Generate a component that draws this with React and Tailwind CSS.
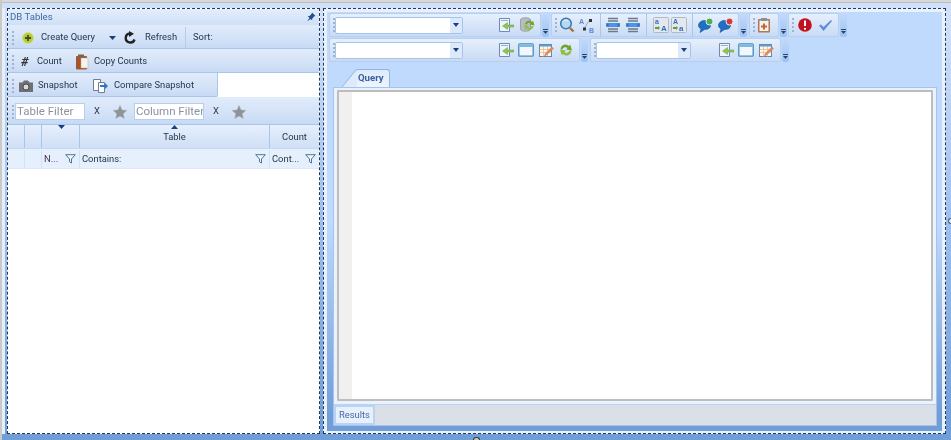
import React from "react";

const Box = ({ w, h = 16, children, vb }) => (
  <svg width={w || h} height={h} viewBox={vb || "0 0 16 16"} className="shrink-0">{children}</svg>
);

const Grip = () => (
  <div className="flex flex-col gap-[2px] w-[3px] items-center shrink-0">
    {[0, 1, 2, 3].map((i) => <div key={i} className="w-[2px] h-[2px] bg-[#9db4d4]" />)}
  </div>
);

const Chevron = ({ w = 6 }) => (
  <svg width={w} height="4" viewBox="0 0 7 4" preserveAspectRatio="none" className="shrink-0"><path d="M0 0h7L3.500 4z" fill="#15417f" /></svg>
);

const Overflow = () => (
  <div className="w-[7px] h-[24px] rounded-[2px] bg-gradient-to-b from-[#c4dafa] to-[#9fc2f3] flex flex-col items-center justify-end pb-[3px] shrink-0">
    <div className="w-[5px] h-[1px] bg-[#23466f] mb-[1px]" />
    <svg width="5" height="3" viewBox="0 0 5 3"><path d="M0 0h5L2.500 3z" fill="#23466f" /></svg>
  </div>
);

const Combo = ({ w }) => (
  <div style={{ width: w }} className="h-[17px] bg-white border border-[#a6c3ec] rounded-[2px] flex justify-end shrink-0">
    <div className="w-[12px] bg-[#dce9fb] flex items-center justify-center"><Chevron /></div>
  </div>
);

const Sep = () => <div className="w-[1px] h-[24px] bg-[#aec6e6] shrink-0" />;

const PageArrow = () => (
  <Box>
    <path d="M1.500 1.500h10v13h-10z" fill="#f1f5fb" stroke="#6c8bb5" />
    <path d="M3 3.500h7" stroke="#8fb0dc" />
    <path d="M16 8H9.500V5.500L4.500 9l5 3.500V10H16z" fill="#8fc45a" stroke="#6ba23c" strokeWidth=".5" />
  </Box>
);
const DbSync = () => (
  <Box>
    <path d="M1.500 3c0-3 10-3 10 0v9c0 3-10 3-10 0z" fill="#b6bcc4" stroke="#9ba2ab" />
    <path d="M6 7a4 4 0 0 1 7-2l1-1.500 1.500 5-5-1 1.500-1a2.400 2.400 0 0 0-4 1z" fill="#6fa52e" />
    <path d="M14.500 9a4 4 0 0 1-7 2.500l-1 1.500L5 8l5 1-1.500 1a2.400 2.400 0 0 0 4-1z" fill="#8cc03f" />
  </Box>
);
const Recycle = () => (
  <Box>
    <path d="M2.500 7a5 5 0 0 1 8.500-3l1.200-1.500 1.800 6-6-1 1.500-1.400a3 3 0 0 0-5 1.400z" fill="#6fa52e" />
    <path d="M13.500 9a5 5 0 0 1-8.500 3l-1.200 1.500L2 7.500l6 1-1.500 1.400a3 3 0 0 0 5-1.400z" fill="#8cc03f" />
  </Box>
);
const WindowIcon = () => (
  <Box>
    <rect x=".8" y="1.800" width="14.400" height="12.400" rx="1" fill="#f3f6fa" stroke="#3f8fc4" strokeWidth="1.300" />
    <rect x="1.500" y="2.500" width="13" height="2.500" fill="#7cb9e4" />
  </Box>
);
const GridEdit = () => (
  <Box>
    <rect x="1.500" y="2.500" width="12" height="12" fill="#fbf8ea" stroke="#5c87b5" />
    <path d="M1.500 7.500h12M1.500 10.500h12M5.500 4.500v10M9.500 4.500v10" stroke="#e6b77a" strokeWidth=".7" />
    <path d="M1.500 2.500h12v2h-12z" fill="#5c9ad0" />
    <path d="M15.500 6.500l-6.500 6-2.500 2 .8-3 6.500-6.500z" fill="#e6953f" stroke="#c2559a" strokeWidth=".5" />
  </Box>
);
const Search = () => (
  <Box>
    <circle cx="7" cy="6.500" r="5.300" fill="#b7d7f2" stroke="#3a78ad" strokeWidth="1.500" />
    <path d="M5 4a3 3 0 0 1 4 0" stroke="#eef6fd" fill="none" />
    <path d="M11 11l3.500 3.500" stroke="#a9713a" strokeWidth="2.400" />
  </Box>
);
const AToB = () => (
  <Box>
    <text x="0" y="7" fontSize="7" fontWeight="700" fill="#5a8cc8" fontFamily="Liberation Sans">A</text>
    <text x="10" y="15.500" fontSize="7" fontWeight="700" fill="#5a8cc8" fontFamily="Liberation Sans">B</text>
    <path d="M11 4L9 5 5.500 11" stroke="#9aa8b8" fill="none" />
    <rect x="10" y="2" width="3" height="3" fill="#333" />
    <rect x="4" y="10.500" width="3" height="3" fill="#333" />
  </Box>
);
const Align = () => (
  <Box>
    <path d="M3 1.500h10M3 4h10M3 12h10M3 14.500h10" stroke="#6f7a88" strokeWidth="1.300" />
    <rect x="1" y="6" width="14" height="4" fill="#4f94e4" />
    <path d="M1 8l2.500-2v4zM15 8l-2.500-2v4z" fill="#2f6fc0" />
  </Box>
);
const CaseIcon = ({ a, b }) => (
  <Box>
    <rect x=".5" y=".5" width="15" height="15" rx="1" fill="#e4e8ee" stroke="#b3b9c0" />
    <text x="2" y="7" fontSize="7" fontWeight="700" fill="#2f6fc0" fontFamily="Liberation Sans">{a}</text>
    <text x="8" y="14" fontSize="8" fontWeight="700" fill="#2f6fc0" fontFamily="Liberation Sans">{b}</text>
    <path d="M2 10h3v-1l2 2-2 2v-1H2z" fill="#5f9e3a" />
  </Box>
);
const Bubble = ({ color }) => (
  <Box>
    <path d="M.5 8.500c0-3 3-5 6-5s6 2 6 5-3 4-6 4L2 15.500l1-3.500C1.500 11 .5 10 .5 8.500z" fill="#1f6fc4" stroke="#124f96" strokeWidth=".6" />
    <circle cx="11.500" cy="4.500" r="3.500" fill={color} stroke="#e9f1f4" strokeWidth="1" />
  </Box>
);
const Clipboard = () => (
  <Box>
    <rect x="2" y="2" width="12" height="13.500" rx="1" fill="#a9795a" />
    <rect x="3.500" y="3.500" width="9" height="10.500" fill="#f5f2ee" />
    <rect x="5" y="1" width="6" height="3" fill="#8b8f96" />
    <path d="M7 6.500h2v2h2v2H9v2H7v-2H5v-2h2z" fill="#c5672c" />
  </Box>
);
const ErrorIcon = () => (
  <Box>
    <circle cx="8" cy="8" r="6.800" fill="#c2121f" />
    <path d="M8 3.500v5.500" stroke="#fff" strokeWidth="2" />
    <circle cx="8" cy="11.800" r="1.100" fill="#fff" />
  </Box>
);
const Check = () => (
  <Box>
    <path d="M2 8.500l2-1 2.500 2.500L14 3l1 1L6.500 14z" fill="#5c8fd8" />
  </Box>
);

const Star = () => (
  <svg width="14" height="14" viewBox="0 0 14 14" className="shrink-0">
    <path d="M7 .5l2 4.500 4.800.5-3.600 3.200 1 4.800L7 11l-4.200 2.500 1-4.800L.2 5.500 5 5z" fill="#8f9297" stroke="#a9adb3" strokeWidth=".5" />
  </svg>
);
const Funnel = () => (
  <svg width="11" height="10" viewBox="0 0 11 10" className="shrink-0">
    <path d="M.7.700h9.600L6.500 5v4L4.500 7.800V5z" fill="#f0f6ff" stroke="#4d7397" strokeWidth="1" />
  </svg>
);

const barClass = "bg-gradient-to-b from-[#e1ecfb] via-[#d6e4f8] to-[#c7daf4] border-b border-[#a9c5ec] flex items-center shrink-0 pt-[2px]";
const groupClass = "h-[24px] bg-gradient-to-b from-[#e6effc] to-[#c9dbf5] border border-[#b8cfef] rounded-[2px] flex items-center shrink-0";
const label = "text-[#26364d] whitespace-nowrap";
const inputClass = "w-[70px] h-[17px] bg-white border border-[#b7cfee] text-[11.5px] text-[#8b93a0] leading-[15px] pl-[1px] overflow-hidden whitespace-nowrap shrink-0";

const TableHead = ({ className = "", children }) => (
  <div className={`h-full border-r border-[#a9c5ec] flex items-center justify-center relative shrink-0 ${className}`}>{children}</div>
);

export default function App() {
  return (
    <div className="relative w-[951px] h-[440px] bg-gradient-to-b from-[#cfe0f8] from-[5%] via-[#9dbeee] via-[50%] to-[#729ed8] to-[95%] flex flex-col overflow-hidden text-[9.4px] [font-family:'Roboto',sans-serif] border-l-2 border-[#c9c9c9] blur-[0.4px]">
      <div className="h-[3px] bg-[#d8d8d8] border-b border-[#bdbdbd] shrink-0" />
      <div className="h-[5px] shrink-0" />
      <div className="flex-1 flex gap-[3px] h-[426px]">
        <div className="w-[5px] shrink-0 border-l-[3px] border-[#e6eefa]" />
        {/* left dock */}
        <div className="w-[313px] h-[426px] bg-white border border-dashed border-[#1d3a63] flex flex-col shrink-0 -ml-[3px]">
          <div className="h-[16px] bg-gradient-to-b from-[#e4eefb] to-[#cfe0f7] flex items-center justify-between pl-[2px] pr-[3px] text-[#3f6aa6] text-[9.6px] shrink-0">
            <span>DB Tables</span>
            <svg width="10" height="10" viewBox="0 0 10 10"><path d="M6 .5L9.500 4 8 4.500 6 7l.3 1.500L4.500 7 1 9.500 3.500 6 1.700 4 3.500 4 5.500 2z" fill="#20508f" /></svg>
          </div>
          <div className={`${barClass} h-[24px] pl-[3px]`}>
            <Grip />
            <svg width="14" height="14" viewBox="0 0 14 14" className="ml-[7px] shrink-0">
              <circle cx="7" cy="7" r="5.500" fill="#b5cd3a" stroke="#d7e27e" />
              <path d="M7 4v6M4 7h6" stroke="#4b4a22" strokeWidth="1.800" />
            </svg>
            <span className={`ml-[6px] w-[68px] ${label}`}>Create Query</span>
            <Chevron w={7} />
            <svg width="14" height="14" viewBox="0 0 14 14" className="ml-[7px] shrink-0">
              <path d="M11.500 8.500A4.500 4.500 0 1 1 7 2.500" fill="none" stroke="#222" strokeWidth="2.400" />
              <path d="M6 0l5 2.800L6 6z" fill="#222" />
            </svg>
            <span className={`ml-[8px] w-[31px] ${label}`}>Refresh</span>
            <div className="w-[1px] h-[22px] bg-[#b5cbe8] ml-[9px]" />
            <span className={`ml-[7px] ${label}`}>Sort:</span>
          </div>
          <div className={`${barClass} h-[24px] pl-[3px]`}>
            <Grip />
            <span className="ml-[7px] w-[12px] text-[13px] font-bold italic text-[#333] leading-none">#</span>
            <span className={`ml-[4px] w-[25px] ${label}`}>Count</span>
            <svg width="14" height="16" viewBox="0 0 14 16" className="ml-[13px] shrink-0">
              <rect x="1" y="2" width="11" height="13.500" rx="1" fill="#a6552a" />
              <path d="M6 4h7v10H6z" fill="#f6f3ee" stroke="#b8a89a" strokeWidth=".5" />
              <rect x="3" y=".5" width="6" height="3" fill="#7a6252" />
            </svg>
            <span className={`ml-[5px] ${label}`}>Copy Counts</span>
          </div>
          <div className="flex h-[24px] shrink-0">
            <div className={`${barClass} w-[210px] h-[24px] pl-[3px] border-r rounded-br-[2px]`}>
              <Grip />
              <svg width="14" height="12" viewBox="0 0 14 12" className="ml-[5px] shrink-0">
                <path d="M0 2.500h3.500L5 .5h4l1.500 2H14V12H0z" fill="#6e6f73" />
                <circle cx="7" cy="7" r="3" fill="#d9d9dc" stroke="#4a4b4f" />
              </svg>
              <span className={`ml-[5px] w-[38px] ${label}`}>Snapshot</span>
              <svg width="16" height="16" viewBox="0 0 16 16" className="ml-[16px] shrink-0">
                <path d="M1.500 1.500h7v11h-7z" fill="#fff" stroke="#6c7f96" />
                <path d="M6.500 4.500h6v10h-6z" fill="#fff" stroke="#6c7f96" />
                <path d="M8 7h5V5l3 3-3 3V9H8z" fill="#2f78c8" />
              </svg>
              <span className={`ml-[6px] ${label}`}>Compare Snapshot</span>
            </div>
          </div>
          <div className={`${barClass} h-[28px] pl-[3px]`}>
            <Grip />
            <div className={`ml-[1px] ${inputClass}`}>Table Filter</div>
            <span className={`ml-[9px] ${label}`}>X</span>
            <div className="ml-[13px]"><Star /></div>
            <div className={`ml-[7px] ${inputClass}`}>Column Filter</div>
            <span className={`ml-[9px] ${label}`}>X</span>
            <div className="ml-[13px]"><Star /></div>
          </div>
          <div className="h-[24px] flex bg-gradient-to-b from-[#e6effc] to-[#cfdff6] border-b border-[#c5d8f2] shrink-0 text-[#26364d]">
            <TableHead className="w-[17px]" />
            <TableHead className="w-[17px]" />
            <TableHead className="w-[38px]">
              <svg width="7" height="4" viewBox="0 0 7 4" className="absolute top-0 left-[16px]"><path d="M0 0h7L3.500 4z" fill="#15417f" /></svg>
            </TableHead>
            <TableHead className="w-[190px] pt-[1px]">
              <svg width="7" height="4" viewBox="0 0 7 4" className="absolute top-0 left-[91px]"><path d="M0 4h7L3.500 0z" fill="#15417f" /></svg>
              Table
            </TableHead>
            <div className="flex-1 flex items-center justify-center pt-[1px]">Count</div>
          </div>
          <div className="h-[20px] flex bg-[#e6f0fc] border-b border-[#dce8f7] shrink-0 text-[#26364d] pt-[1px]">
            <TableHead className="w-[17px] !border-[#d3e1f4]" />
            <TableHead className="w-[17px] !border-[#d3e1f4]" />
            <TableHead className="w-[38px] !border-[#d3e1f4] !justify-between pl-[2px] pr-[3px]"><span className="text-[#4a2f5c]">N...</span><Funnel /></TableHead>
            <TableHead className="w-[190px] !border-[#d3e1f4] !justify-between pl-[2px] pr-[3px]">Contains:<Funnel /></TableHead>
            <div className="flex-1 flex items-center justify-between pl-[2px] pr-[3px]">Cont...<Funnel /></div>
          </div>
          <div className="flex-1 bg-white" />
        </div>

        {/* right dock */}
        <div className="w-[623px] h-[426px] border border-dashed border-[#1d3a63] bg-[#e9f1fc] p-[3px] pb-[2px] shrink-0 flex">
          <div className="flex-1 bg-gradient-to-b from-[#bfdafd] from-[50%] to-[#729ed8] to-[96%] flex flex-col pl-[2px] pt-[1px] pr-[5px] pb-[5px]">
            {/* toolbar 1 */}
            <div className="flex items-start gap-[1px] h-[25px] shrink-0">
              <div className={`${groupClass} w-[212px] pl-[2px]`}>
                <Grip />
                <Combo w={128} />
                <div className="ml-[35px] flex gap-[5px]"><PageArrow /><DbSync /></div>
              </div>
              <Overflow />
              <div className={`${groupClass} ml-[1px] w-[188px] pl-[2px]`}>
                <Grip />
                <div className="ml-[2px]"><Search /></div>
                <div className="ml-[4px]"><AToB /></div>
                <div className="ml-[5px]"><Sep /></div>
                <div className="ml-[4px] flex gap-[4px]"><Align /><Align /></div>
                <div className="ml-[5px]"><Sep /></div>
                <div className="ml-[6px] flex gap-[2px]"><CaseIcon a="a" b="A" /><CaseIcon a="A" b="a" /></div>
                <div className="ml-[5px]"><Sep /></div>
                <div className="ml-[5px] flex gap-[4px]"><Bubble color="#4fae4f" /><Bubble color="#d9363e" /></div>
              </div>
              <Overflow />
              <div className={`${groupClass} ml-[1px] w-[30px] pl-[2px]`}>
                <Grip />
                <div className="ml-[1px]"><Clipboard /></div>
              </div>
              <Overflow />
              <div className={`${groupClass} w-[51px] pl-[2px]`}>
                <Grip />
                <div className="ml-[3px]"><ErrorIcon /></div>
                <div className="ml-[4px]"><Check /></div>
              </div>
              <Overflow />
            </div>
            {/* toolbar 2 */}
            <div className="flex items-start gap-[1px] h-[25px] shrink-0">
              <div className={`${groupClass} w-[251px] pl-[2px]`}>
                <Grip />
                <Combo w={128} />
                <div className="ml-[35px] flex gap-[4px]"><PageArrow /><WindowIcon /><GridEdit /><Recycle /></div>
              </div>
              <Overflow />
              <div className={`${groupClass} ml-[1px] w-[191px] pl-[2px]`}>
                <Grip />
                <Combo w={95} />
                <div className="ml-[27px] flex gap-[4px]"><PageArrow /><WindowIcon /><GridEdit /></div>
              </div>
              <Overflow />
            </div>
            {/* tab */}
            <div className="h-[18px] mt-[6px] flex items-end pl-[13px] shrink-0">
              <svg width="16" height="18" viewBox="0 0 16 18" className="shrink-0 -mr-[1px]">
                <path d="M0 18L14 1h2v17z" fill="#dfeafa" />
                <path d="M0 18L14 1h2" fill="none" stroke="#8fb4e6" />
              </svg>
              <div className="h-[18px] w-[33px] bg-gradient-to-b from-[#dfeafa] to-[#edf4fd] border-t border-r border-[#8fb4e6] rounded-tr-[3px] text-[#3a5fa0] font-bold text-[9.6px] flex items-center pl-[1px]">Query</div>
            </div>
            {/* editor */}
            <div className="flex-1 ml-[4px] bg-[#eaf2fd] border border-[#a5c3ec] flex flex-col min-h-0">
              <div className="flex-1 mx-[3px] mt-[2px] mb-[3px] border-2 border-[#bdbdbd] flex bg-white min-h-0 rounded-[1px]">
                <div className="w-[13px] bg-[#f0f0f0]" />
              </div>
              <div className="h-[21px] bg-[#dbdfe8] flex border-t border-[#bcd2f0] shrink-0">
                <div className="w-[41px] h-[20px] bg-[#e8f0fc] border-[2px] border-[#b9d3f5] text-[#4a66a6] flex items-center pl-[3px]">Results</div>
              </div>
            </div>
          </div>
        </div>
      </div>
      <div className="h-[6px] shrink-0" />
      <div className="absolute right-0 top-[218px] w-[3px] h-[6px] rounded-l-full border border-r-0 border-[#4a5f78] bg-[#e8eef5]" />
      <div className="absolute bottom-0 left-[471px] w-[7px] h-[3px] rounded-t-full border border-b-0 border-[#2a3f58] bg-[#d8c8a8]" />
    </div>
  );
}
